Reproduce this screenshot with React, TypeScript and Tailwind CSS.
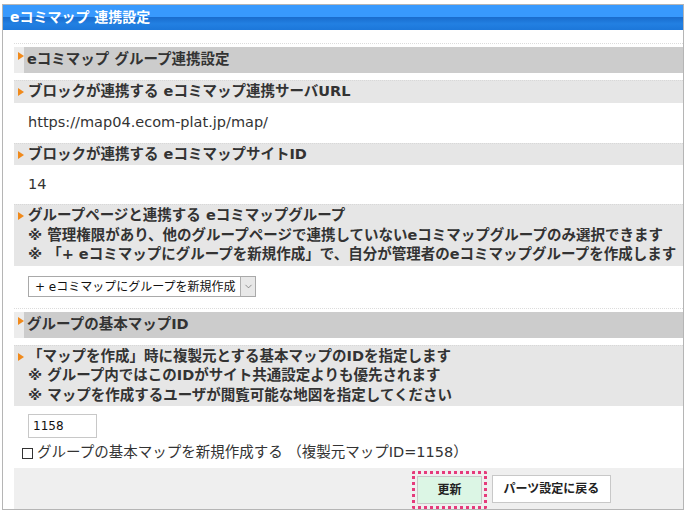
import { ChevronDown } from "lucide-react";

const font = { fontFamily: '"DejaVu Sans", "Noto Sans CJK JP", sans-serif' };

function Tri({ className = "" }: { className?: string }) {
    return (
        <span
            className={
                "block w-0 h-0 border-y-[4px] border-y-transparent border-l-[6px] border-l-[#f08a1c] " + className
            }
        />
    );
}

function SectionHead({ children }: { children: React.ReactNode }) {
    return (
        <div className="flex border-t border-dotted border-[#dcdcdc] pt-[3px] bg-white">
            <div className="w-[10px] bg-[#ececec] pt-[5px] flex justify-end">
                <Tri />
            </div>
            <div className="flex-1 h-[26px] bg-[#cccccc] flex items-center pl-[3px] text-[14.5px] font-bold text-[#333]">
                {children}
            </div>
        </div>
    );
}

function ItemHead({ lines }: { lines: string[] }) {
    return (
        <div className="border-t border-dotted border-[#d8d8d8] bg-[#e6e6e6] py-px relative">
            <Tri className="absolute left-[4px] top-[7px]" />
            {lines.map((l, i) => (
                <div key={i} className="pl-[14px] h-[19.5px] leading-[19.5px] text-[14.5px] font-bold text-[#333] whitespace-nowrap">
                    {l}
                </div>
            ))}
        </div>
    );
}

export default function App() {
    return (
        <div className="pt-[4px] pl-[2px] bg-white" style={font}>
            <div className="w-[682px] h-[506px] border border-[#b5b5b5] bg-white flex flex-col">
                <div className="h-[25px] bg-[linear-gradient(to_bottom,#3899fd_0%,#3899fd_46%,#1a6dce_50%,#2280e2_75%,#1c77da_100%)] flex items-center pl-[7px] text-[14px] font-bold text-white">
                    eコミマップ 連携設定
                </div>
                <div className="flex-1 flex flex-col pl-[11px] pt-[13px]">
                    <SectionHead>eコミマップ グループ連携設定</SectionHead>
                    <div className="h-[7px]" />
                    <ItemHead lines={["ブロックが連携する eコミマップ連携サーバURL"]} />
                    <div className="h-[40px] flex items-center pl-[14px] text-[14.5px] text-[#333]">
                        https://map04.ecom-plat.jp/map/
                    </div>
                    <ItemHead lines={["ブロックが連携する eコミマップサイトID"]} />
                    <div className="h-[39px] flex items-center pl-[14px] text-[14.5px] text-[#333]">14</div>
                    <ItemHead
                        lines={[
                            "グループページと連携する eコミマップグループ",
                            "※ 管理権限があり、他のグループページで連携していないeコミマップグループのみ選択できます",
                            "※ 「+ eコミマップにグループを新規作成」で、自分が管理者のeコミマップグループを作成します",
                        ]}
                    />
                    <div className="h-[42px] flex items-center pl-[14px]">
                        <div className="w-[228px] h-[21px] border border-[#a9a9a9] bg-white flex items-stretch">
                            <span className="flex-1 flex items-center pl-[6px] text-[12px] text-[#111]">
                                + eコミマップにグループを新規作成
                            </span>
                            <span className="w-[15px] bg-[#e8e8e8] border-l border-[#b0b0b0] flex items-center justify-center">
                                <ChevronDown size={11} strokeWidth={1.5} className="text-[#666]" />
                            </span>
                        </div>
                    </div>
                    <SectionHead>グループの基本マップID</SectionHead>
                    <div className="h-[7px]" />
                    <ItemHead
                        lines={[
                            "「マップを作成」時に複製元とする基本マップのIDを指定します",
                            "※ グループ内ではこのIDがサイト共通設定よりも優先されます",
                            "※ マップを作成するユーザが閲覧可能な地図を指定してください",
                        ]}
                    />
                    <div className="pt-[8px] pl-[14px]">
                        <div className="w-[69px] h-[24px] border border-[#c8c8c8] bg-white flex items-center pl-[4px] text-[12px] text-[#111]">
                            1158
                        </div>
                    </div>
                    <div className="h-[30px] flex items-center pl-[8px] text-[14.5px] text-[#333]">
                        <span className="w-[11px] h-[11px] border border-[#333] mr-[4px]" />
                        グループの基本マップを新規作成する （複製元マップID=1158）
                    </div>
                    <div className="flex-1 bg-[#efefef] flex items-start pt-[3px] pl-[398px] gap-[5px]">
                        <div className="p-[2px] border-[3px] border-dotted border-[#e53a7b] rounded-[2px]">
                            <button className="w-[65px] h-[28px] bg-[#dcf6e5] border border-[#c8c8c8] text-[12px] font-bold text-[#222]">
                                更新
                            </button>
                        </div>
                        <button className="mt-[4px] w-[119px] h-[28px] bg-white border border-[#c8c8c8] text-[12px] font-bold text-[#222]">
                            パーツ設定に戻る
                        </button>
                    </div>
                </div>
            </div>
        </div>
    );
}
